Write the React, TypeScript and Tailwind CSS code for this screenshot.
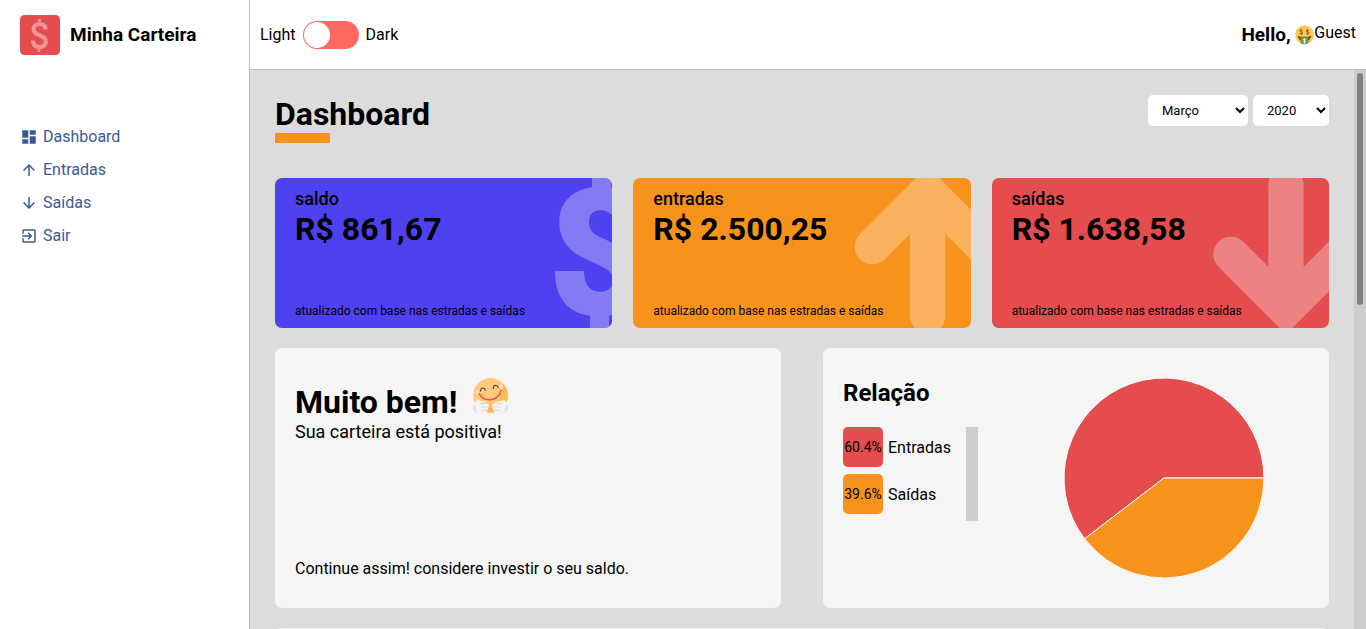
import React from "react";
import { MdArrowDownward, MdArrowUpward, MdDashboard, MdExitToApp } from "react-icons/md";

const DOLLAR =
  "M156 7H213V52C275 62 316 105 318 187H230C230 145 215 121 180 121C160 121 147 133 147 157C147 185 165 195 195 208L216 218C270 240 310 265 310 332C310 390 270 428 207 437V480H150V437C80 428 45 380 45 303H132C132 345 150 365 180 365C205 365 219 352 219 330C219 305 200 295 155 275C105 253 58 225 58 155C58 100 95 60 156 52Z";

const navItems = [
  { label: "Dashboard", Icon: MdDashboard },
  { label: "Entradas", Icon: MdArrowUpward },
  { label: "Saídas", Icon: MdArrowDownward },
  { label: "Sair", Icon: MdExitToApp },
];

function Sidebar() {
  return (
    <aside className="w-[250px] shrink-0 border-r border-[#bfbfbf] bg-white px-5">
      <div className="flex h-[70px] items-center gap-2.5">
        <svg viewBox="0 0 40 40" className="size-10" aria-hidden="true">
          <rect width="40" height="40" rx="4.500" fill="#e44c4e" />
          <g fill="none" stroke="#fff" opacity=".4">
            <path
              d="M25.600 14.500C25.600 11 23 9 19.600 9 16 9 13.500 11 13.500 14 13.500 17.600 16 18.700 19.600 20.200 23.500 21.800 25.800 23.200 25.800 26.500 25.800 30 23 32 19.300 32 15.500 32 13 30 13 25.600"
              strokeWidth="4.200"
            />
            <path d="M19.500 4V7M19 34V37" strokeWidth="2.800" />
          </g>
        </svg>
        <h3 className="text-[19px] leading-[22px] font-bold">Minha Carteira</h3>
      </div>
      <nav className="mt-[50px] flex flex-col">
        {navItems.map(({ label, Icon }) => (
          <a key={label} href="#" className="my-[7px] flex items-center gap-[5px] leading-[19px] text-[#3b5998]">
            <Icon className="size-[18px]" />
            {label}
          </a>
        ))}
      </nav>
    </aside>
  );
}

function MoneyFace() {
  return (
    <svg viewBox="0 0 57 60" className="h-5 w-[19px]" aria-hidden="true">
      <circle cx="28.500" cy="29" r="28" fill="#ffca4f" />
      <path d="M4 42A28 28 0 0 0 53 42Q42 54 28.500 54T4 42Z" fill="#f5a935" />
      <path d="M8 32Q28 39 49 32 47 49 28.500 49 10 49 8 32Z" fill="#7a4a1c" />
      <path d="M17 37H40V50Q40 58 28.500 58 17 58 17 50Z" fill="#5b9b51" />
      <g fill="none" stroke="#8a5620" strokeWidth="2.600">
        <path d="M23 17Q22 14.500 18.500 14.500 14.500 14.500 14.500 17.500T19 21Q23 21.500 23 24.500T18.500 27.500Q14.500 27.500 14 25M18.700 12V30" />
        <path d="M42 17Q41 14.500 37.500 14.500 33.500 14.500 33.500 17.500T38 21Q42 21.500 42 24.500T37.500 27.500Q33.500 27.500 33 25M37.700 12V30" />
      </g>
      <path d="M32.500 43.500Q31.500 41.500 28.500 41.500 25 41.500 25 44T28.500 47Q32.500 47.500 32.500 50T28.500 53Q25 53 24.500 51M28.700 39.500V55" fill="none" stroke="#fff" strokeWidth="2.600" />
    </svg>
  );
}

function Header() {
  return (
    <header className="flex h-[70px] shrink-0 items-center justify-between border-b border-[#bfbfbf] bg-white px-2.5">
      <label className="flex cursor-pointer items-center">
        <span>Light</span>
        <input type="checkbox" className="peer sr-only" />
        <span className="mx-[7px] flex h-7 w-14 items-center rounded-full bg-[#ff6961] p-px peer-checked:justify-end">
          <span className="size-[26px] rounded-full bg-white" />
        </span>
        <span>Dark</span>
      </label>
      <div className="flex items-center">
        <h3 className="text-[19px] leading-[22px] font-bold whitespace-pre">Hello, </h3>
        <MoneyFace />
        <span className="pb-1">Guest</span>
      </div>
    </header>
  );
}

function UpArrow() {
  return (
    <g fill="none" stroke="#fff" strokeWidth="106">
      <path d="M757 230 923 64 1089 230M923 64V438" strokeLinecap="round" />
    </g>
  );
}

function DownArrow() {
  return (
    <g fill="none" stroke="#fff" strokeWidth="106">
      <path d="M753 253 918 418 1083 253M918 418V44" strokeLinecap="round" />
    </g>
  );
}

const wallets = [
  { title: "saldo", amount: "R$ 861,67", bg: "bg-[#4e41f0]", viewBox: "-144 24 360 450", art: <path d={DOLLAR} fill="#fff" /> },
  { title: "entradas", amount: "R$ 2.500,25", bg: "bg-[#f7931b]", viewBox: "693 24 360 450", art: <UpArrow /> },
  { title: "saídas", amount: "R$ 1.638,58", bg: "bg-[#e44c4e]", viewBox: "687 24 360 450", art: <DownArrow /> },
];

function WalletCards() {
  return (
    <section className="grid grid-cols-3 gap-[21px]">
      {wallets.map((w) => (
        <article key={w.title} className={`relative flex h-[150px] flex-col overflow-hidden rounded-[7px] px-5 py-2.5 ${w.bg}`}>
          <svg viewBox={w.viewBox} className="absolute top-0 right-0 h-full w-[120px]" aria-hidden="true">
            <g opacity=".3">{w.art}</g>
          </svg>
          <span className="text-lg leading-[22px] font-medium">{w.title}</span>
          <strong className="text-[32px] leading-[38px] font-bold">{w.amount}</strong>
          <small className="mt-auto text-xs leading-[14px]">atualizado com base nas estradas e saídas</small>
        </article>
      ))}
    </section>
  );
}

function HappyFace() {
  return (
    <svg viewBox="0 0 35 35" className="size-[35px]" aria-hidden="true">
      <circle cx="17.600" cy="17.500" r="17.400" fill="#ffca7a" />
      <path d="M30 5.500A17.400 17.400 0 0 1 21 34.500L14 33Q31 24 30 5.500Z" fill="#ffb74b" opacity=".75" />
      <circle cx="4.200" cy="14" r="2" fill="#ffe0b8" />
      <circle cx="28.300" cy="9" r="2" fill="#ffe0b8" />
      <path d="M7.500 13Q7.800 9.800 10.200 10 12 10.200 12.200 12.200M20.200 10.600Q20.500 7.500 22.600 7.300 24.600 7.300 25.200 9.800" fill="none" stroke="#4b3f4e" strokeWidth="1.100" strokeLinecap="round" />
      <path d="M6.200 15.700Q10 22.700 17.800 21.700 26.400 20.500 28 12.500" fill="none" stroke="#ef4b50" strokeWidth="1.400" strokeLinecap="round" />
      <path d="M5 22Q0 23 0 29q.5 6 6 6h8l2-9-5-2Z" fill="#f4f4f4" />
      <path d="M30 22q5 1 5 7-.5 6-6 6h-8l-2-9 5-2Z" fill="#f4f4f4" />
      <path d="M0 28q0 6 5 7Q2 31 2 27ZM35 28q0 6-5 7 3-4 3-8Z" fill="#e2e2e4" />
      <path d="M7 25.500h8M8 29h7M8 32.500h6M20 25.500h8M20 29h7M21 32.500h6" stroke="#d9d9dc" strokeWidth="1" />
      <path d="M17.500 28q-2 3-4 6.300h8Q19.500 31 17.500 28Z" fill="#ffb74b" />
      <path d="M15.500 25h4l-2 5Z" fill="#ffb74b" />
    </svg>
  );
}

function MessageBox() {
  return (
    <article className="flex h-[260px] flex-col justify-between rounded-[7px] bg-[#f5f5f5] px-5 py-[30px]">
      <header>
        <h1 className="flex gap-[15px] text-[32px] leading-[38px] font-bold">
          <span className="pt-[5px]">Muito bem!</span>
          <HappyFace />
        </h1>
        <p className="text-lg leading-[22px]">Sua carteira está positiva!</p>
      </header>
      <footer className="leading-[19px]">Continue assim! considere investir o seu saldo.</footer>
    </article>
  );
}

const legend = [
  { label: "Entradas", percent: "60.4%", bg: "bg-[#e44c4e]" },
  { label: "Saídas", percent: "39.6%", bg: "bg-[#f7931b]" },
];

function RelationBox() {
  return (
    <article className="flex h-[260px] rounded-[7px] bg-[#f5f5f5] px-5">
      <div className="flex w-[175px] flex-col items-start">
        <h2 className="mt-[30px] mb-[19px] text-2xl leading-[30px] font-bold">Relação</h2>
        <div className="flex gap-[15px]">
          <ul>
            {legend.map((item) => (
              <li key={item.label} className="mb-[7px] flex items-center gap-[5px]">
                <span className={`flex size-10 items-center justify-center rounded-[5px] text-sm ${item.bg}`}>{item.percent}</span>
                <span className="leading-[25px]">{item.label}</span>
              </li>
            ))}
          </ul>
          <div className="w-3 bg-[#cdcdcd]" />
        </div>
      </div>
      <div className="flex flex-1 items-center justify-center">
        <svg viewBox="-101 -101 202 202" className="size-[202px]" role="img" aria-label="Relação">
          <g stroke="#fff" strokeWidth="1">
            <path d="M0 0H100A100 100 0 1 0 -79.400 60.800Z" fill="#e44c4e" />
            <path d="M0 0H100A100 100 0 0 1 -79.400 60.800Z" fill="#f7931b" />
          </g>
        </svg>
      </div>
    </article>
  );
}

const selectStyle = "h-[31px] rounded-[5px] bg-white px-2.5 text-[13px]";

function Dashboard() {
  return (
    <main className="flex-1 overflow-y-auto p-[25px] [scrollbar-width:none]">
      <div className="mb-[35px] flex items-start justify-between">
        <h1 className="text-[32px] leading-[38px] font-bold after:block after:h-2.5 after:w-[55px] after:bg-[#f7931b]">Dashboard</h1>
        <div className="flex gap-[5px]">
          <select aria-label="Mês" className={`w-[100px] ${selectStyle}`} defaultValue="Março">
            <option>Janeiro</option>
            <option>Fevereiro</option>
            <option>Março</option>
          </select>
          <select aria-label="Ano" className={`w-[76px] ${selectStyle}`} defaultValue="2020">
            <option>2020</option>
            <option>2019</option>
          </select>
        </div>
      </div>
      <WalletCards />
      <section className="mt-5 grid grid-cols-2 gap-x-[42px] gap-y-5">
        <MessageBox />
        <RelationBox />
        <div className="col-span-2 h-[360px] rounded-[7px] bg-[#f5f5f5]" />
      </section>
    </main>
  );
}

export default function App() {
  return (
    <div className="flex h-screen font-['Roboto',sans-serif] text-base text-black">
      <Sidebar />
      <div className="flex min-w-0 flex-1 flex-col">
        <Header />
        <div className="flex min-h-0 flex-1 bg-[#dcdcdc]">
          <Dashboard />
          <div className="w-3 shrink-0 bg-[#cdcdcd] p-[3px]" aria-hidden="true">
            <div className="h-[42%] rounded-full bg-[#7f8282]" />
          </div>
        </div>
      </div>
    </div>
  );
}
